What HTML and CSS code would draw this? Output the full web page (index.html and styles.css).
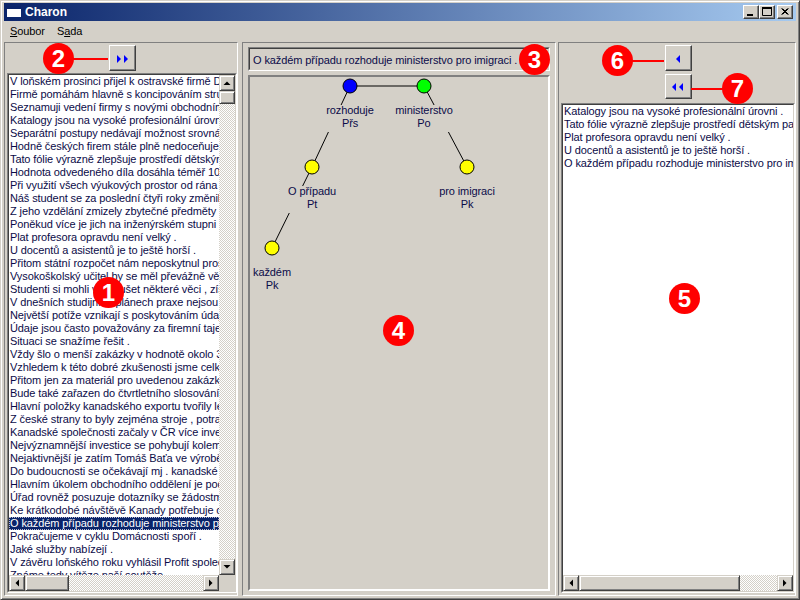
FILE: index.html
```html
<!DOCTYPE html>
<html>
<head>
<meta charset="utf-8">
<title>Charon</title>
<link rel="stylesheet" href="styles.css">
</head>
<body>
<div class="window">
  <div class="titlebar">
    <svg class="appicon" width="16" height="14" viewBox="0 0 16 14">
      <rect x="1" y="1" width="14" height="11" fill="#fff"/>
      <rect x="1" y="1" width="14" height="3" fill="#0A246A"/>
    </svg>
    <span class="title">Charon</span>
    <div class="caption-btns">
      <span class="cbtn"><svg width="14" height="12" viewBox="0 0 14 12"><rect x="3" y="8" width="6" height="2" fill="#000"/></svg></span>
      <span class="cbtn"><svg width="14" height="12" viewBox="0 0 14 12"><path d="M2.5 1.5h9v8h-9z" fill="none" stroke="#000"/><rect x="2" y="1" width="10" height="2" fill="#000"/></svg></span>
      <span class="cbtn close"><svg width="14" height="12" viewBox="0 0 14 12"><path d="M3.5 2.5l6 6M4.5 2.5l6 6M9.5 2.5l-6 6M10.5 2.5l-6 6" stroke="#000" stroke-width="1"/></svg></span>
    </div>
  </div>
  <div class="menubar">
    <span class="menu"><u>S</u>oubor</span>
    <span class="menu">S<u>a</u>da</span>
  </div>
  <div class="main">
    <section class="panel panel-left">
      <div class="btnrow">
        <button class="btn"><svg width="25" height="24" viewBox="0 0 25 24"><path d="M7 9l4 4-4 4z M14 9l4 4-4 4z" fill="#0000FF"/></svg></button>
      </div>
      <div class="listbox">
        <div class="listbox-in">
          <div class="items">
            <div class="item">V loňském prosinci přijel k ostravské firmě Dalkia nový ředitel .</div>
            <div class="item">Firmě pomáhám hlavně s koncipováním strukturované nabídky .</div>
            <div class="item">Seznamuji vedení firmy s novými obchodními partnery .</div>
            <div class="item">Katalogy jsou na vysoké profesionální úrovni .</div>
            <div class="item">Separátní postupy nedávají možnost srovnání .</div>
            <div class="item">Hodně českých firem stále plně nedoceňuje význam .</div>
            <div class="item">Tato fólie výrazně zlepšuje prostředí dětským pacientům .</div>
            <div class="item">Hodnota odvedeného díla dosáhla téměř 10 milionů .</div>
            <div class="item">Při využití všech výukových prostor od rána do večera .</div>
            <div class="item">Náš student se za poslední čtyři roky změnil .</div>
            <div class="item">Z jeho vzdělání zmizely zbytečné předměty .</div>
            <div class="item">Poněkud více je jich na inženýrském stupni .</div>
            <div class="item">Plat profesora opravdu není velký .</div>
            <div class="item">U docentů a asistentů je to ještě horší .</div>
            <div class="item">Přitom státní rozpočet nám neposkytnul prostředky .</div>
            <div class="item">Vysokoškolský učitel by se měl převážně věnovat výuce .</div>
            <div class="item">Studenti si mohli vyzkoušet některé věci , získat praxi .</div>
            <div class="item">V dnešních studijních plánech praxe nejsou zařazeny .</div>
            <div class="item">Největší potíže vznikají s poskytováním údajů .</div>
            <div class="item">Údaje jsou často považovány za firemní tajemství .</div>
            <div class="item">Situaci se snažíme řešit .</div>
            <div class="item">Vždy šlo o menší zakázky v hodnotě okolo 300 tisíc .</div>
            <div class="item">Vzhledem k této dobré zkušenosti jsme celkem spokojeni .</div>
            <div class="item">Přitom jen za materiál pro uvedenou zakázku zaplatili .</div>
            <div class="item">Bude také zařazen do čtvrtletního slosování o ceny .</div>
            <div class="item">Hlavní položky kanadského exportu tvořily letadla .</div>
            <div class="item">Z české strany to byly zejména stroje , potraviny .</div>
            <div class="item">Kanadské společnosti začaly v ČR více investovat .</div>
            <div class="item">Nejvýznamnější investice se pohybují kolem miliardy .</div>
            <div class="item">Nejaktivnější je zatím Tomáš Baťa ve výrobě obuvi .</div>
            <div class="item">Do budoucnosti se očekávají mj . kanadské investice .</div>
            <div class="item">Hlavním úkolem obchodního oddělení je podpora exportu .</div>
            <div class="item">Úřad rovněž posuzuje dotazníky se žádostmi o víza .</div>
            <div class="item">Ke krátkodobé návštěvě Kanady potřebuje občan vízum .</div>
            <div class="item selected">O každém případu rozhoduje ministerstvo pro imigraci .</div>
            <div class="item">Pokračujeme v cyklu Domácnosti spoří .</div>
            <div class="item">Jaké služby nabízejí .</div>
            <div class="item">V závěru loňského roku vyhlásil Profit společně soutěž .</div>
            <div class="item">Známe tedy vítěze naší soutěže .</div>
          </div>
          <div class="vscroll">
            <span class="sbtn"><svg width="14" height="14" viewBox="0 0 14 14"><path d="M3.5 9h7L7 5.5z" fill="#000"/></svg></span>
            <span class="sthumb vthumb"></span>
            <span class="strack"></span>
            <span class="sbtn"><svg width="14" height="14" viewBox="0 0 14 14"><path d="M3.5 5h7L7 8.5z" fill="#000"/></svg></span>
          </div>
          <div class="hscroll">
            <span class="sbtn"><svg width="14" height="14" viewBox="0 0 14 14"><path d="M9 3.5v7L5.5 7z" fill="#000"/></svg></span>
            <span class="sthumb hthumb-left"></span>
            <span class="strack"></span>
            <span class="sbtn"><svg width="14" height="14" viewBox="0 0 14 14"><path d="M5 3.5v7L8.5 7z" fill="#000"/></svg></span>
          </div>
          <div class="corner"></div>
        </div>
      </div>
    </section>

    <section class="panel panel-mid">
      <div class="sentence"><span>O každém případu rozhoduje ministerstvo pro imigraci .</span></div>
      <div class="tree">
        <svg class="tree-svg" width="298" height="512" viewBox="0 0 298 512">
          <g stroke="#000" stroke-width="1">
            <line x1="100" y1="9" x2="174" y2="9"/>
            <line x1="100" y1="9" x2="62" y2="90"/>
            <line x1="174" y1="9" x2="217" y2="90"/>
            <line x1="62" y1="90" x2="22" y2="171"/>
          </g>
          <g fill="#D4D0C8">
            <rect x="75" y="28" width="50" height="27"/>
            <rect x="145" y="28" width="58" height="27"/>
            <rect x="37" y="109" width="50" height="27"/>
            <rect x="189" y="109" width="56" height="27"/>
            <rect x="4" y="190" width="36" height="27"/>
          </g>
          <g stroke="#000" stroke-width="1">
            <circle cx="100" cy="9" r="7" fill="#0000FF"/>
            <circle cx="174" cy="9" r="7" fill="#00FF00"/>
            <circle cx="62" cy="90" r="7" fill="#FFFF00"/>
            <circle cx="217" cy="90" r="7" fill="#FFFF00"/>
            <circle cx="22" cy="171" r="7" fill="#FFFF00"/>
          </g>
          <g class="tree-label" text-anchor="middle">
            <text x="100" y="37">rozhoduje</text>
            <text x="100" y="50">Přs</text>
            <text x="174" y="37">ministerstvo</text>
            <text x="174" y="50">Po</text>
            <text x="62" y="118">O případu</text>
            <text x="62" y="131">Pt</text>
            <text x="217" y="118">pro imigraci</text>
            <text x="217" y="131">Pk</text>
            <text x="22" y="199">každém</text>
            <text x="22" y="212">Pk</text>
          </g>
        </svg>
      </div>
    </section>

    <section class="panel panel-right">
      <div class="btnstack">
        <button class="btn"><svg width="25" height="24" viewBox="0 0 25 24"><path d="M14 9l-4 4 4 4z" fill="#0000FF"/></svg></button>
        <button class="btn"><svg width="25" height="24" viewBox="0 0 25 24"><path d="M10 8l-4 4 4 4z M17 8l-4 4 4 4z" fill="#0000FF"/></svg></button>
      </div>
      <div class="listbox listbox-right">
        <div class="listbox-in">
          <div class="items">
            <div class="item">Katalogy jsou na vysoké profesionální úrovni .</div>
            <div class="item">Tato fólie výrazně zlepšuje prostředí dětským pacientům .</div>
            <div class="item">Plat profesora opravdu není velký .</div>
            <div class="item">U docentů a asistentů je to ještě horší .</div>
            <div class="item">O každém případu rozhoduje ministerstvo pro imigraci .</div>
          </div>
          <div class="hscroll">
            <span class="sbtn"><svg width="14" height="14" viewBox="0 0 14 14"><path d="M9 3.5v7L5.5 7z" fill="#000"/></svg></span>
            <span class="sthumb hthumb-right"></span>
            <span class="strack"></span>
            <span class="sbtn"><svg width="14" height="14" viewBox="0 0 14 14"><path d="M5 3.5v7L8.5 7z" fill="#000"/></svg></span>
          </div>
        </div>
      </div>
    </section>
  </div>

  <div class="badge b1">1</div>
  <div class="callout c2"></div>
  <div class="badge b2">2</div>
  <div class="badge b3">3</div>
  <div class="badge b4">4</div>
  <div class="badge b5">5</div>
  <div class="callout c6"></div>
  <div class="badge b6">6</div>
  <div class="callout c7"></div>
  <div class="badge b7">7</div>
</div>
</body>
</html>
```

FILE: styles.css
```css
* { box-sizing: border-box; }

body {
  margin: 0;
  width: 800px;
  height: 600px;
  overflow: hidden;
  background: #D4D0C8;
  font-family: "Liberation Sans", Arial, sans-serif;
  font-size: 11px;
  letter-spacing: -0.1px;
  color: #000;
}

.window {
  position: relative;
  width: 800px;
  height: 600px;
  border: 1px solid;
  border-color: #D4D0C8 #404040 #404040 #D4D0C8;
  box-shadow: inset 1px 1px #fff, inset -1px -1px #808080;
  padding: 2px 3px 3px 3px;
  display: flex;
  flex-direction: column;
}

/* title bar */
.titlebar {
  height: 18px;
  flex: none;
  display: flex;
  align-items: center;
  background: linear-gradient(to right, #0A246A, #A6CAF0);
  color: #fff;
}
.appicon { margin-left: 2px; flex: none; }
.title {
  margin-left: 3px;
  font-weight: bold;
  font-size: 12px;
  letter-spacing: 0;
}
.caption-btns {
  margin-left: auto;
  margin-right: 3px;
  display: flex;
}
.cbtn {
  width: 16px;
  height: 14px;
  background: #D4D0C8;
  border: 1px solid;
  border-color: #fff #404040 #404040 #fff;
  box-shadow: inset -1px -1px #808080;
  display: flex;
}
.cbtn.close { margin-left: 2px; }

/* menu */
.menubar {
  height: 20px;
  flex: none;
  display: flex;
  padding-top: 1px;
  line-height: 19px;
}
.menu { padding: 0 6px; }

/* main */
.main {
  flex: 1;
  display: flex;
  padding-top: 1px;
  min-height: 0;
}
.panel {
  border: 1px solid;
  border-color: #808080 #fff #fff #808080;
  display: flex;
  flex-direction: column;
  min-height: 0;
}
.panel-left {
  width: 234px;
  padding: 2px 0 2px 2px;
}
.panel-mid {
  width: 314px;
  margin-left: 4px;
  padding: 4px 5px 4px 5px;
}
.panel-right {
  width: 238px;
  margin-left: 2px;
  padding: 2px 0 2px 2px;
}

.btnrow {
  display: flex;
  justify-content: center;
  flex: none;
}
.btnstack {
  display: flex;
  flex-direction: column;
  align-items: center;
  gap: 3px;
  flex: none;
}
.btn {
  width: 27px;
  height: 26px;
  padding: 0;
  margin: 0;
  background: #D4D0C8;
  border: 1px solid;
  border-color: #fff #404040 #404040 #fff;
  box-shadow: inset -1px -1px #808080;
  display: flex;
}
.btnstack .btn:last-child { height: 25px; }

/* list boxes */
.listbox {
  margin-top: 2px;
  flex: 1;
  min-height: 0;
  border: 1px solid;
  border-color: #808080 #fff #fff #808080;
  display: flex;
}
.listbox-right { margin-top: 4px; }
.listbox-in {
  flex: 1;
  min-width: 0;
  border: 1px solid;
  border-color: #404040 #D4D0C8 #D4D0C8 #404040;
  background: #fff;
  display: grid;
  grid-template-columns: 1fr 16px;
  grid-template-rows: 1fr 16px;
}
.listbox-right .listbox-in { grid-template-columns: 1fr; }
.items {
  overflow: hidden;
  min-height: 0;
  color: #0B0B48;
}
.item {
  height: 13px;
  line-height: 13px;
  padding-left: 1px;
  white-space: nowrap;
}
.item.selected {
  background: #0A246A;
  color: #fff;
  outline: 1px dotted #B8B8D0;
  outline-offset: -1px;
}

/* scrollbars */
.vscroll {
  display: flex;
  flex-direction: column;
  min-height: 0;
}
.hscroll { display: flex; }
.sbtn {
  flex: none;
  width: 16px;
  height: 16px;
  background: #D4D0C8;
  border: 1px solid;
  border-color: #D4D0C8 #404040 #404040 #D4D0C8;
  box-shadow: inset 1px 1px #fff, inset -1px -1px #808080;
  display: flex;
}
.sthumb {
  flex: none;
  background: #D4D0C8;
  border: 1px solid;
  border-color: #D4D0C8 #404040 #404040 #D4D0C8;
  box-shadow: inset 1px 1px #fff, inset -1px -1px #808080;
}
.vthumb { width: 16px; height: 13px; }
.hthumb-left { height: 16px; width: 44px; }
.hthumb-right { height: 16px; width: 161px; }
.strack {
  flex: 1;
  background-color: #fff;
  background-image: repeating-conic-gradient(#D4D0C8 0 25%, #fff 0 50%);
  background-size: 2px 2px;
}
.corner { background: #D4D0C8; }

/* middle panel */
.sentence {
  height: 24px;
  flex: none;
  border: 1px solid;
  border-color: #808080 #fff #fff #808080;
}
.sentence span {
  display: block;
  height: 22px;
  line-height: 22px;
  padding-left: 3px;
  border: 1px solid;
  border-color: #404040 #D4D0C8 #D4D0C8 #404040;
  color: #0B0B48;
  white-space: nowrap;
  overflow: hidden;
}
.tree {
  margin-top: 4px;
  flex: 1;
  border: 2px solid;
  border-color: #808080 #fff #fff #808080;
  background: #D4D0C8;
  overflow: hidden;
}
.tree-svg { display: block; }
.tree-label {
  font-family: "Liberation Sans", Arial, sans-serif;
  font-size: 11px;
  fill: #0B0B48;
}

/* callout badges */
.badge {
  position: absolute;
  width: 31px;
  height: 31px;
  border-radius: 50%;
  background: #F00;
  color: #fff;
  font-weight: bold;
  font-size: 24px;
  letter-spacing: 0;
  line-height: 31px;
  text-align: center;
}
.b1 { left: 92px; top: 276px; }
.b2 { left: 42px; top: 42px; }
.b3 { left: 518px; top: 43px; }
.b4 { left: 382px; top: 314px; }
.b5 { left: 668px; top: 282px; }
.b6 { left: 601px; top: 44px; }
.b7 { left: 721px; top: 72px; }

.callout {
  position: absolute;
  height: 2px;
  background: #F00;
}
.c2 { left: 70px; top: 57px; width: 37px; }
.c6 { left: 628px; top: 59px; width: 35px; }
.c7 { left: 690px; top: 87px; width: 34px; }
```
